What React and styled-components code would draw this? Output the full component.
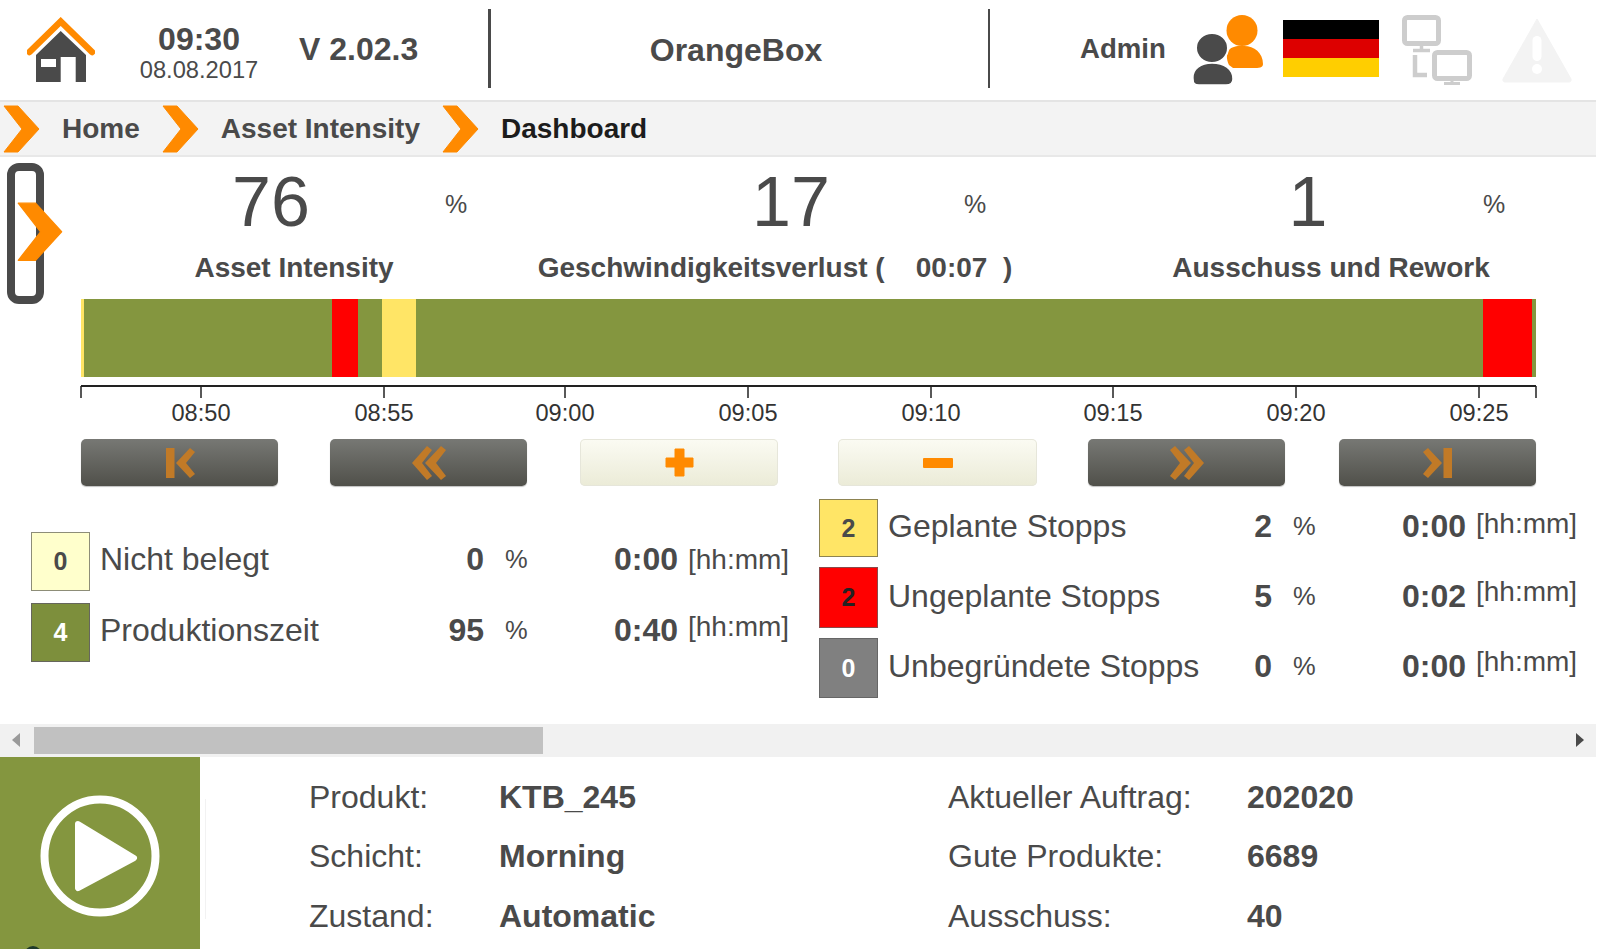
import React from 'react';
import styled, { createGlobalStyle } from 'styled-components';

const GlobalStyle = createGlobalStyle`
  html, body {
    margin: 0;
    padding: 0;
    background: #fff;
    overflow: hidden;
  }
  body {
    font-family: "Liberation Sans", Arial, sans-serif;
    color: #4a4a4a;
  }
`;

const ORANGE = '#ff8a00';
const GREEN = '#84963f';
const DARK = '#4a4a4a';

const Page = styled.div`
  position: relative;
  width: 1596px;
  height: 950px;
  overflow: hidden;
`;

/* header */
const Header = styled.header`
  display: grid;
  grid-template-columns: 488px 3px 497px 2px 1fr;
  height: 100px;
`;

const HeaderLeft = styled.div`
  display: flex;
  align-items: center;
  padding-left: 27px;
`;

const Clock = styled.div`
  width: 120px;
  margin: 4px 0 0 44px;
  text-align: center;
`;

const Time = styled.div`
  font-size: 32px;
  font-weight: 700;
  line-height: 36px;
`;

const DateText = styled.div`
  font-size: 23.7px;
  line-height: 26px;
`;

const Version = styled.div`
  margin: 0 0 2px 40px;
  font-size: 32px;
  font-weight: 700;
`;

const Divider = styled.div`
  background: ${DARK};
  height: 79px;
  margin-top: 9px;
`;

const Title = styled.div`
  display: flex;
  align-items: center;
  justify-content: center;
  padding: 0 7px 0 0;
  font-size: 32px;
  font-weight: 700;
`;

const HeaderRight = styled.div`
  display: flex;
  align-items: center;
  padding-left: 90px;
`;

const Admin = styled.div`
  width: 113px;
  font-size: 27.6px;
  font-weight: 700;
  margin-bottom: 2px;
`;

const Flag = styled.div`
  display: flex;
  flex-direction: column;
  width: 96px;
  height: 57px;
  margin-left: 20px;
  margin-bottom: 4px;
  box-shadow: inset 0 0 0 1px rgba(190, 140, 0, 0.25);
`;

const FlagBand = styled.div`
  flex: 1;
  background: ${(p) => p.$color};
`;

const IconSlot = styled.div`
  display: flex;
  margin-left: ${(p) => p.$left}px;
`;

/* breadcrumb */
const Crumbs = styled.nav`
  display: flex;
  align-items: center;
  gap: 22px;
  height: 57px;
  padding-left: 3px;
  box-sizing: border-box;
  background: #f3f3f3;
  border-top: 2px solid #e4e4e4;
  border-bottom: 2px solid #e8e8e8;
`;

const Crumb = styled.span`
  font-size: 28px;
  font-weight: 700;
  color: ${(p) => (p.$active ? '#1c1c1c' : DARK)};
`;

/* kpis */
const Kpis = styled.section`
  display: grid;
  grid-template-columns: 520px 518px 1fr;
  height: 142px;
  padding-left: 70px;
`;

const Kpi = styled.div`
  display: flex;
  flex-direction: column;
`;

const KpiValues = styled.div`
  display: grid;
  grid-template-columns: 200px 1fr;
  height: 91px;
  margin-left: ${(p) => p.$left}px;
`;

const KpiNumber = styled.div`
  font-size: 70px;
  line-height: 90px;
  text-align: center;
`;

const KpiUnit = styled.div`
  font-size: 25px;
  line-height: 94px;
  padding-left: ${(p) => p.$pad || 74}px;
`;

const KpiLabel = styled.div`
  width: 560px;
  margin-left: ${(p) => p.$left}px;
  font-size: 28px;
  font-weight: 700;
  line-height: 40px;
  text-align: center;
  white-space: pre;
`;

const Handle = styled.svg`
  position: absolute;
  left: 7px;
  top: 163px;
`;

/* timeline */
const Bar = styled.div`
  display: flex;
  height: 78px;
  margin: 0 60px 0 81px;
`;

const Segment = styled.div`
  width: ${(p) => p.$w}px;
  background: ${(p) => p.$color};
`;

const Axis = styled.svg`
  display: block;
  margin-left: 70px;
  text {
    font-family: "Liberation Sans", Arial, sans-serif;
    font-size: 23.6px;
    fill: #333;
    text-anchor: middle;
  }
`;

const Controls = styled.div`
  display: grid;
  grid-template-columns: 249px 250px 258px 250px 251px 197px;
  height: 48px;
  margin: 9px 0 0 81px;
`;

const ControlButton = styled.button`
  display: flex;
  align-items: center;
  justify-content: center;
  width: ${(p) => p.$w || 197}px;
  height: 47px;
  padding: 0;
  border: none;
  border-radius: 5px;
  background: ${(p) =>
    p.$light
      ? 'linear-gradient(#fbfbf3, #ebebd7)'
      : 'linear-gradient(#777874, #50504a)'};
  box-shadow: ${(p) =>
    p.$light
      ? 'inset 0 0 0 1px #e6e6da'
      : '0 1px 1px rgba(0, 0, 0, 0.25)'};
`;

/* legend */
const Legend = styled.section`
  display: grid;
  grid-template-columns: 788px 1fr;
  height: 237px;
  padding-left: 31px;
`;

const LegendColumn = styled.div`
  display: flex;
  flex-direction: column;
  gap: ${(p) => p.$gap}px;
  padding-top: ${(p) => p.$top}px;
`;

const LegendRow = styled.div`
  display: grid;
  grid-template-columns: 59px 394px 21px 173px 1fr;
  height: ${(p) => p.$h || 59}px;
  line-height: ${(p) => p.$line || 55}px;
`;

const Badge = styled.div`
  display: flex;
  align-items: center;
  justify-content: center;
  box-sizing: border-box;
  height: ${(p) => p.$h || 59}px;
  line-height: 1;
  background: ${(p) => p.$bg};
  color: ${(p) => p.$fg};
  border: 1.5px solid ${(p) => p.$line};
  font-size: 25px;
  font-weight: 700;
`;

const LegendText = styled.div`
  grid-column: 2;
  grid-row: 1;
  font-size: 32px;
  padding-left: 10px;
`;

const LegendValue = styled.div`
  grid-column: ${(p) => p.$col};
  grid-row: 1;
  font-size: 32px;
  font-weight: 700;
  text-align: right;
`;

const LegendPercent = styled.div`
  grid-column: 3 / span 2;
  grid-row: 1;
  font-size: 25.5px;
  padding-left: 21px;
`;

const LegendUnit = styled.div`
  grid-column: 5;
  grid-row: 1;
  padding-left: 10px;
  font-size: 28px;
  transform: translateY(${(p) => -(p.$lift || 0)}px);
`;

/* scrollbar */
const Scrollbar = styled.div`
  display: flex;
  align-items: center;
  justify-content: space-between;
  height: 33px;
  box-sizing: border-box;
  padding: 2px 12px 4px 12px;
  background: #f1f1f1;
`;

const Thumb = styled.div`
  position: absolute;
  left: 34px;
  top: 727px;
  width: 509px;
  height: 27px;
  background: #c1c1c1;
`;

const ArrowGlyph = styled.div`
  width: 0;
  height: 0;
  border-top: 7px solid transparent;
  border-bottom: 7px solid transparent;
  ${(p) =>
    p.$right
      ? `border-left: 8px solid ${DARK};`
      : 'border-right: 8px solid #9a9a9a;'}
`;

/* footer */
const Footer = styled.footer`
  display: flex;
  height: 192px;
`;

const PlayTile = styled.div`
  position: relative;
  display: flex;
  align-items: center;
  justify-content: center;
  box-sizing: border-box;
  width: 200px;
  height: 192px;
  padding-top: 6px;
  overflow: hidden;
  background: ${GREEN};
`;

const Peek = styled.div`
  position: absolute;
  left: 24px;
  top: 189px;
  width: 18px;
  height: 18px;
  border-radius: 50%;
  background: #1f3a2a;
`;

const FooterRule = styled.div`
  width: 1px;
  height: 120px;
  margin: 42px 0 0 5px;
  background: #f2f2f2;
`;

const Info = styled.div`
  display: grid;
  grid-template-columns: 190px 449px 299px 1fr;
  grid-auto-rows: 59.5px;
  padding: 10.5px 0 0 103px;
  font-size: 32px;
  line-height: 59.5px;
`;

const InfoValue = styled.div`
  font-weight: 700;
`;

const Chevron = ({ w = 37, h = 48 }) => (
  <svg width={w} height={h} viewBox="0 0 37 48">
    <polygon
      points="1,1 15,1 36,24 15,47 1,47 19,24"
      fill={ORANGE}
      stroke={ORANGE}
      strokeWidth="1"
      strokeLinejoin="round"
    />
  </svg>
);

const HomeIcon = () => (
  <svg width="68" height="66" viewBox="27 18 68 66">
    <path d="M36 56 L60.7 32 L86 56 V83 H75.7 V58 H60.7 V83 H36 Z" fill={DARK} />
    <rect x="41" y="60" width="15" height="8" fill="#fff" />
    <path
      d="M29.5 53 L60.7 22.5 L92 53"
      fill="none"
      stroke={ORANGE}
      strokeWidth="6.5"
      strokeLinejoin="miter"
      strokeLinecap="round"
    />
  </svg>
);

const UsersIcon = () => (
  <svg width="70" height="70" viewBox="0 0 70 70">
    <ellipse cx="49" cy="15.5" rx="15.5" ry="15.5" fill={ORANGE} />
    <path d="M36 50 C30 36 38 30 49 31 C60 30 70 37 70 49 C70 53 66 53 60 53 H40 Z" fill={ORANGE} />
    <ellipse cx="19" cy="33" rx="16" ry="15" fill={DARK} stroke="#fff" strokeWidth="2" />
    <path
      d="M0 64 C-1 54 8 48 19 48 C31 48 40 54 40 64 C40 69 37 70 33 70 H6 C2 70 0 69 0 64 Z"
      fill={DARK}
      stroke="#fff"
      strokeWidth="1.5"
    />
  </svg>
);

const NetworkIcon = () => (
  <svg width="70" height="70" viewBox="0 0 70 70" fill="none" stroke="#cdcdcd">
    <rect x="2.5" y="2.5" width="34" height="26" rx="3" strokeWidth="5" />
    <path d="M19.5 30 V35 M11 35.5 H28" strokeWidth="3.5" />
    <path d="M13 40 V60 H25" strokeWidth="4.5" />
    <rect x="32.5" y="37.5" width="35" height="26" rx="3" strokeWidth="5" />
    <path d="M50 65 V68 M42 68.5 H58" strokeWidth="3" />
  </svg>
);

const WarningIcon = () => (
  <svg width="70" height="66" viewBox="0 0 70 66">
    <path d="M35 2 L69 62 Q70 65 66 65 H4 Q0 65 1 62 Z" fill="#f3f3f3" stroke="#f3f3f3" strokeLinejoin="round" />
    <rect x="30.5" y="19" width="9" height="25" rx="4.5" fill="#fff" />
    <circle cx="35" cy="52" r="5" fill="#fff" />
  </svg>
);

const ButtonIcon = ({ kind }) => {
  const dim = '#c17a27';
  if (kind === 'plus') {
    return (
      <svg width="29" height="29" viewBox="0 0 29 29">
        <path d="M10 1 H19 V10 H28 V19 H19 V28 H10 V19 H1 V10 H10 Z" fill={ORANGE} stroke={ORANGE} strokeLinejoin="round" />
      </svg>
    );
  }
  if (kind === 'minus') {
    return (
      <svg width="30" height="10" viewBox="0 0 30 10">
        <rect width="30" height="10" rx="1" fill={ORANGE} />
      </svg>
    );
  }
  const left = kind === 'first' || kind === 'back';
  const flip = left ? undefined : 'translate(34 0) scale(-1 1)';
  return (
    <svg width="34" height="34" viewBox="0 0 34 34">
      <g transform={flip} fill={dim}>
        {kind === 'first' || kind === 'last' ? (
          <>
            <rect x="3" y="2" width="8.5" height="30" />
            <path d="M27 2 L32 6 L23 17 L32 28 L27 32 L13 17 Z" />
          </>
        ) : (
          <>
            <path d="M15 0 L20 4 L10 17 L20 30 L15 34 L0 17 Z" />
            <path d="M29 0 L34 4 L24 17 L34 30 L29 34 L13 17 Z" />
          </>
        )}
      </g>
    </svg>
  );
};

const ticks = [
  ['08:50', 201],
  ['08:55', 384],
  ['09:00', 565],
  ['09:05', 748],
  ['09:10', 931],
  ['09:15', 1113],
  ['09:20', 1296],
  ['09:25', 1479],
];

const segments = [
  ['#ffe566', 3],
  [GREEN, 248],
  ['#ff0000', 26],
  [GREEN, 24],
  ['#ffe566', 34],
  [GREEN, 1067],
  ['#ff0000', 49],
  [GREEN, 4],
];

const leftRows = [
  { n: '0', bg: '#ffffcc', fg: DARK, line: '#8d8d78', name: 'Nicht belegt', pct: '0', time: '0:00', lift: 0 },
  { n: '4', bg: '#7d8f3c', fg: '#fff', line: '#66665c', name: 'Produktionszeit', pct: '95', time: '0:40', lift: 4 },
];

const rightRows = [
  { n: '2', bg: '#ffe566', fg: DARK, line: '#8d8350', name: 'Geplante Stopps', pct: '2', time: '0:00', lift: 3, h: 58 },
  { n: '2', bg: '#ff0000', fg: '#222', line: '#8a4a4a', name: 'Ungeplante Stopps', pct: '5', time: '0:02', lift: 5, h: 61, textLine: 59 },
  { n: '0', bg: '#808080', fg: '#fff', line: '#666', name: 'Unbegründete Stopps', pct: '0', time: '0:00', lift: 5, h: 60, textLine: 57 },
];

const Row = ({ row }) => (
  <LegendRow $h={row.h} $line={row.textLine}>
    <Badge $bg={row.bg} $fg={row.fg} $line={row.line} $h={row.h}>{row.n}</Badge>
    <LegendText>{row.name}</LegendText>
    <LegendValue $col="2">{row.pct}</LegendValue>
    <LegendPercent>%</LegendPercent>
    <LegendValue $col="3 / span 2">{row.time}</LegendValue>
    <LegendUnit $lift={row.lift}>[hh:mm]</LegendUnit>
  </LegendRow>
);

const App = () => (
  <Page>
    <GlobalStyle />
    <Header>
      <HeaderLeft>
        <HomeIcon />
        <Clock>
          <Time>09:30</Time>
          <DateText>08.08.2017</DateText>
        </Clock>
        <Version>V 2.02.3</Version>
      </HeaderLeft>
      <Divider />
      <Title>OrangeBox</Title>
      <Divider />
      <HeaderRight>
        <Admin>Admin</Admin>
        <UsersIcon />
        <Flag>
          <FlagBand $color="#000" />
          <FlagBand $color="#dd0000" />
          <FlagBand $color="#ffce00" />
        </Flag>
        <IconSlot $left={23}><NetworkIcon /></IconSlot>
        <IconSlot $left={30}><WarningIcon /></IconSlot>
      </HeaderRight>
    </Header>

    <Crumbs>
      <Chevron />
      <Crumb>Home</Crumb>
      <Chevron />
      <Crumb>Asset Intensity</Crumb>
      <Chevron />
      <Crumb $active>Dashboard</Crumb>
    </Crumbs>

    <Kpis>
      <Kpi>
        <KpiValues $left={101}>
          <KpiNumber>76</KpiNumber>
          <KpiUnit>%</KpiUnit>
        </KpiValues>
        <KpiLabel $left={-56}>Asset Intensity</KpiLabel>
      </Kpi>
      <Kpi>
        <KpiValues $left={101}>
          <KpiNumber>17</KpiNumber>
          <KpiUnit $pad={73}>%</KpiUnit>
        </KpiValues>
        <KpiLabel $left={-95}>Geschwindigkeitsverlust (    00:07  )</KpiLabel>
      </Kpi>
      <Kpi>
        <KpiValues $left={100}>
          <KpiNumber>1</KpiNumber>
          <KpiUnit $pad={75}>%</KpiUnit>
        </KpiValues>
        <KpiLabel $left={-57}>Ausschuss und Rework</KpiLabel>
      </Kpi>
    </Kpis>

    <Handle width="58" height="142" viewBox="0 0 58 142">
      <rect x="4" y="4" width="29" height="133" rx="8" fill="none" stroke={DARK} strokeWidth="8" />
      <g transform="translate(10 39) scale(1.24 1.24)">
        <polygon points="1,1 15,1 36,24 15,47 1,47 19,24" fill={ORANGE} stroke={ORANGE} strokeLinejoin="round" />
      </g>
    </Handle>

    <Bar>
      {segments.map(([color, w], i) => (
        <Segment key={i} $color={color} $w={w} />
      ))}
    </Bar>

    <Axis width="1500" height="53" viewBox="70 377 1500 53">
      <path d="M81 386 H1536" stroke="#222" strokeWidth="2" fill="none" />
      <path d="M81 386 V398 M1536 386 V398" stroke="#222" strokeWidth="1.5" fill="none" />
      {ticks.map(([label, x]) => (
        <g key={label}>
          <line x1={x} x2={x} y1="386" y2="398" stroke="#222" strokeWidth="1.5" />
          <text x={x} y="421">{label}</text>
        </g>
      ))}
    </Axis>

    <Controls>
      <ControlButton><ButtonIcon kind="first" /></ControlButton>
      <ControlButton><ButtonIcon kind="back" /></ControlButton>
      <ControlButton $light $w={198}><ButtonIcon kind="plus" /></ControlButton>
      <ControlButton $light $w={199}><ButtonIcon kind="minus" /></ControlButton>
      <ControlButton><ButtonIcon kind="forward" /></ControlButton>
      <ControlButton><ButtonIcon kind="last" /></ControlButton>
    </Controls>

    <Legend>
      <LegendColumn $top={45} $gap={12}>
        {leftRows.map((row) => <Row key={row.name} row={row} />)}
      </LegendColumn>
      <LegendColumn $top={12} $gap={10}>
        {rightRows.map((row) => <Row key={row.name} row={row} />)}
      </LegendColumn>
    </Legend>

    <Scrollbar>
      <ArrowGlyph />
      <ArrowGlyph $right />
    </Scrollbar>
    <Thumb />

    <Footer>
      <PlayTile>
        <svg width="120" height="122" viewBox="0 0 120 122">
          <ellipse cx="60" cy="61" rx="55.5" ry="56.5" fill="none" stroke="#fff" strokeWidth="8" />
          <path d="M38 29 L94 63 L38 93 Z" fill="#fff" stroke="#fff" strokeWidth="6" strokeLinejoin="round" />
        </svg>
        <Peek />
      </PlayTile>
      <FooterRule />
      <Info>
        <div>Produkt:</div>
        <InfoValue>KTB_245</InfoValue>
        <div>Aktueller Auftrag:</div>
        <InfoValue>202020</InfoValue>
        <div>Schicht:</div>
        <InfoValue>Morning</InfoValue>
        <div>Gute Produkte:</div>
        <InfoValue>6689</InfoValue>
        <div>Zustand:</div>
        <InfoValue>Automatic</InfoValue>
        <div>Ausschuss:</div>
        <InfoValue>40</InfoValue>
      </Info>
    </Footer>
  </Page>
);

export default App;
